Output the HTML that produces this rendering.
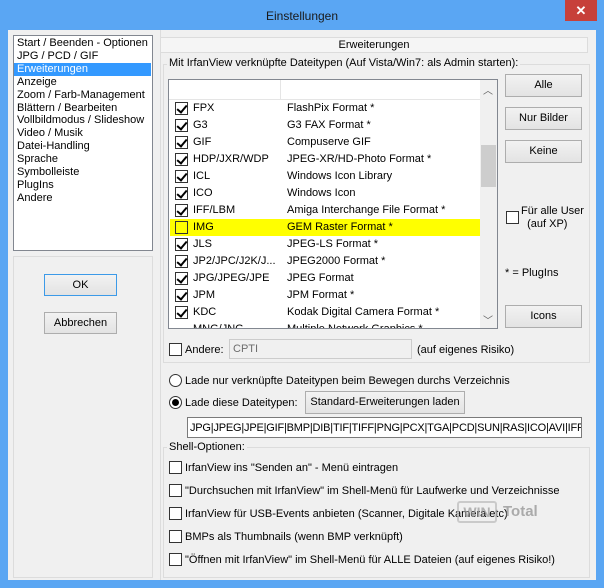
<!DOCTYPE html>
<html><head><meta charset="utf-8"><style>
*{box-sizing:border-box;margin:0;padding:0}
body{width:604px;height:588px;background:#5aa6f3;font-family:"Liberation Sans",sans-serif;font-size:11px;color:#000;position:relative;overflow:hidden}
.a{position:absolute;white-space:nowrap}
.title{left:0;top:9px;width:604px;text-align:center;font-size:12px;color:#1a1a1a}
.close{left:565px;top:0;width:32px;height:21px;background:#c7403a;color:#fff;text-align:center;font-size:13px;line-height:21px;font-weight:bold}
.client{left:8px;top:30px;width:588px;height:550px;background:#f0f0f0}
.btn{position:absolute;background:linear-gradient(#f2f2f2,#e3e3e3);border:1px solid #adadad;text-align:center;font-size:11px}
.cb{position:absolute;width:13px;height:13px;border:1px solid #333;background:#fff}
.cb.c::after{content:"";position:absolute;left:3px;top:0px;width:4px;height:8px;border:solid #000;border-width:0 2px 2px 0;transform:rotate(40deg)}
.gb{position:absolute;border:1px solid #dcdcdc}
.row{position:absolute;left:170px;width:310px;height:17px}
.row span{position:absolute;top:2px}
.rad{position:absolute;width:13px;height:13px;border:1px solid #333;border-radius:50%;background:#fff}
.t{top:1px}
</style></head><body>
<div class="a title">Einstellungen</div>
<div class="a close">✕</div>
<div class="a client"></div>

<div class="a" style="left:13px;top:35px;width:140px;height:216px;background:#fff;border:1px solid #828790"></div>
<div class="a" style="left:14px;top:63px;width:137px;height:13px;background:#3399ff"></div>
<div class="a" style="left:17px;top:37px;line-height:12.9px">Start / Beenden - Optionen<br>JPG / PCD / GIF<br><span style="color:#fff">Erweiterungen</span><br>Anzeige<br>Zoom / Farb-Management<br>Blättern / Bearbeiten<br>Vollbildmodus / Slideshow<br>Video / Musik<br>Datei-Handling<br>Sprache<br>Symbolleiste<br>PlugIns<br>Andere</div>

<div class="gb" style="left:13px;top:256px;width:140px;height:322px"></div>
<div class="btn" style="left:44px;top:274px;width:73px;height:22px;border-color:#3c9ae8;line-height:20px">OK</div>
<div class="btn" style="left:44px;top:312px;width:73px;height:22px;line-height:20px">Abbrechen</div>
<div class="a" style="left:160px;top:30px;width:1px;height:550px;background:#dcdcdc"></div>

<div class="a" style="left:160px;top:37px;width:428px;height:16px;border:1px solid #dcdcdc;background:#f5f5f5;text-align:center;line-height:14px">Erweiterungen</div>

<div class="gb" style="left:163px;top:64px;width:427px;height:299px"></div>
<div class="a" style="left:167px;top:57px;background:#f0f0f0;padding:0 2px">Mit IrfanView verknüpfte Dateitypen (Auf Vista/Win7: als Admin starten):</div>

<div class="a" style="left:168px;top:79px;width:330px;height:250px;background:#fff;border:1px solid #828790"></div>
<div class="a" style="left:280px;top:80px;width:1px;height:20px;background:#e5e5e5"></div>
<div class="a" style="left:169px;top:99px;width:311px;height:1px;background:#e5e5e5"></div>
<div class="a" style="left:480px;top:80px;width:17px;height:248px;background:#f0f0f0"></div>
<div class="a" style="left:481px;top:145px;width:15px;height:42px;background:#cdcdcd"></div>
<div class="a" style="left:483px;top:82px;font-size:10px;color:#606060">︿</div>
<div class="a" style="left:483px;top:312px;font-size:10px;color:#606060">﹀</div>

<div class="a" style="left:170px;top:219px;width:310px;height:17px;background:#ffff00"></div>
<div class="row" style="top:100px"><div class="cb c" style="left:5px;top:2px"></div><span style="left:23px">FPX</span><span style="left:117px">FlashPix Format *</span></div>
<div class="row" style="top:117px"><div class="cb c" style="left:5px;top:2px"></div><span style="left:23px">G3</span><span style="left:117px">G3 FAX Format *</span></div>
<div class="row" style="top:134px"><div class="cb c" style="left:5px;top:2px"></div><span style="left:23px">GIF</span><span style="left:117px">Compuserve GIF</span></div>
<div class="row" style="top:151px"><div class="cb c" style="left:5px;top:2px"></div><span style="left:23px">HDP/JXR/WDP</span><span style="left:117px">JPEG-XR/HD-Photo Format *</span></div>
<div class="row" style="top:168px"><div class="cb c" style="left:5px;top:2px"></div><span style="left:23px">ICL</span><span style="left:117px">Windows Icon Library</span></div>
<div class="row" style="top:185px"><div class="cb c" style="left:5px;top:2px"></div><span style="left:23px">ICO</span><span style="left:117px">Windows Icon</span></div>
<div class="row" style="top:202px"><div class="cb c" style="left:5px;top:2px"></div><span style="left:23px">IFF/LBM</span><span style="left:117px">Amiga Interchange File Format *</span></div>
<div class="row" style="top:219px"><div class="cb" style="left:5px;top:2px;background:#ffff00"></div><span style="left:23px">IMG</span><span style="left:117px">GEM Raster Format *</span></div>
<div class="row" style="top:236px"><div class="cb c" style="left:5px;top:2px"></div><span style="left:23px">JLS</span><span style="left:117px">JPEG-LS Format *</span></div>
<div class="row" style="top:253px"><div class="cb c" style="left:5px;top:2px"></div><span style="left:23px">JP2/JPC/J2K/J...</span><span style="left:117px">JPEG2000 Format *</span></div>
<div class="row" style="top:270px"><div class="cb c" style="left:5px;top:2px"></div><span style="left:23px">JPG/JPEG/JPE</span><span style="left:117px">JPEG Format</span></div>
<div class="row" style="top:287px"><div class="cb c" style="left:5px;top:2px"></div><span style="left:23px">JPM</span><span style="left:117px">JPM Format *</span></div>
<div class="row" style="top:304px"><div class="cb c" style="left:5px;top:2px"></div><span style="left:23px">KDC</span><span style="left:117px">Kodak Digital Camera Format *</span></div>
<div class="row" style="top:321px;height:7px;overflow:hidden"><span style="left:23px">MNG/JNG</span><span style="left:117px">Multiple Network Graphics *</span></div>

<div class="btn" style="left:505px;top:74px;width:77px;height:23px;line-height:21px">Alle</div>
<div class="btn" style="left:505px;top:107px;width:77px;height:23px;line-height:21px">Nur Bilder</div>
<div class="btn" style="left:505px;top:140px;width:77px;height:23px;line-height:21px">Keine</div>
<div class="btn" style="left:505px;top:305px;width:77px;height:23px;line-height:21px">Icons</div>
<div class="cb" style="left:506px;top:211px"></div>
<div class="a" style="left:521px;top:205px;line-height:13px">Für alle User<br>&nbsp;&nbsp;(auf XP)</div>
<div class="a" style="left:505px;top:267px">* = PlugIns</div>

<div class="cb" style="left:169px;top:343px"></div>
<div class="a" style="left:185px;top:344px">Andere:</div>
<div class="a" style="left:229px;top:339px;width:183px;height:20px;border:1px solid #ccc;background:#f0f0f0;color:#6d6d6d;padding:3px 3px">CPTI</div>
<div class="a" style="left:417px;top:344px">(auf eigenes Risiko)</div>

<div class="rad" style="left:169px;top:374px"></div>
<div class="a" style="left:185px;top:375px">Lade nur verknüpfte Dateitypen beim Bewegen durchs Verzeichnis</div>
<div class="rad" style="left:169px;top:396px"></div>
<div class="a" style="left:172px;top:399px;width:7px;height:7px;border-radius:50%;background:#000"></div>
<div class="a" style="left:185px;top:397px">Lade diese Dateitypen:</div>
<div class="btn" style="left:305px;top:391px;width:160px;height:23px;line-height:21px">Standard-Erweiterungen laden</div>
<div class="a" style="left:187px;top:417px;width:395px;height:21px;border:1px solid #7a7a7a;background:#fff;padding:4px 2px;overflow:hidden;letter-spacing:-0.2px">JPG|JPEG|JPE|GIF|BMP|DIB|TIF|TIFF|PNG|PCX|TGA|PCD|SUN|RAS|ICO|AVI|IFF|PPM</div>

<div class="gb" style="left:163px;top:447px;width:427px;height:131px"></div>
<div class="a" style="left:167px;top:441px;background:#f0f0f0;padding:0 2px">Shell-Optionen:</div>
<div class="cb" style="left:169px;top:461px"></div><div class="a" style="left:185px;top:462px">IrfanView ins "Senden an" - Menü eintragen</div>
<div class="cb" style="left:169px;top:484px"></div><div class="a" style="left:185px;top:485px">"Durchsuchen mit IrfanView" im Shell-Menü für Laufwerke und Verzeichnisse</div>
<div class="cb" style="left:169px;top:507px"></div><div class="a" style="left:185px;top:508px">IrfanView für USB-Events anbieten (Scanner, Digitale Kamera etc)</div>
<div class="cb" style="left:169px;top:530px"></div><div class="a" style="left:185px;top:531px">BMPs als Thumbnails (wenn BMP verknüpft)</div>
<div class="cb" style="left:169px;top:553px"></div><div class="a" style="left:185px;top:554px">"Öffnen mit IrfanView" im Shell-Menü für ALLE Dateien (auf eigenes Risiko!)</div>
<div class="a" style="left:457px;top:501px;width:40px;height:22px;border:2px solid #bbb;border-radius:3px;color:#999;font-weight:bold;font-size:14px;line-height:18px;text-align:center;opacity:.7">WIN</div>
<div class="a" style="left:503px;top:503px;color:#aaa;font-weight:bold;font-size:15px">Total</div>
</body></html>
